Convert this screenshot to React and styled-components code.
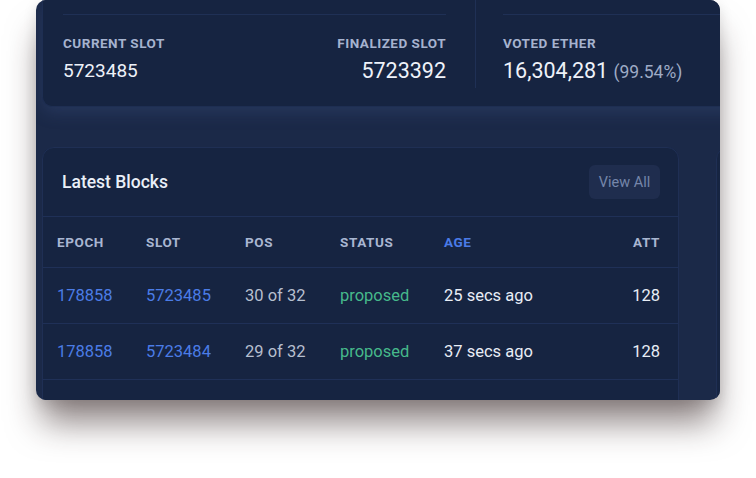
import React from "react";
import styled, { createGlobalStyle } from "styled-components";

const GlobalStyle = createGlobalStyle`
  body {
    margin: 0;
    background: #ffffff;
    font-family: Roboto, "Liberation Sans", sans-serif;
  }
`;

const Stage = styled.div`
  width: 756px;
  height: 478px;
  padding-left: 36px;
  box-sizing: border-box;
`;

const Window = styled.div`
  width: 684px;
  height: 400px;
  border-radius: 10px;
  overflow: hidden;
  background: #1b2948;
  box-shadow: 0 28px 34px -6px rgba(45, 28, 28, 0.55), 0 4px 14px rgba(0, 0, 0, 0.12);
  padding-left: 6px;
  box-sizing: border-box;
  display: flex;
  flex-direction: column;
`;

const StatsCard = styled.div`
  flex: none;
  width: 720px;
  height: 107px;
  box-sizing: border-box;
  background: #162441;
  border: 1px solid #1e2e52;
  border-top: none;
  border-radius: 0 0 10px 10px;
  padding-left: 20px;
  display: flex;
  align-items: flex-start;
  box-shadow: 0 6px 16px rgba(70, 95, 150, 0.25);
`;

const StatGroup = styled.div`
  width: ${(p) => p.width}px;
  margin-top: 14px;
  border-top: 1px solid #1f3055;
  padding-top: 20px;
  display: flex;
  justify-content: space-between;
`;

const Divider = styled.div`
  width: 1px;
  height: 88px;
  background: #1f3055;
  margin: 0 27px 0 29px;
`;

const Stat = styled.div`
  display: flex;
  flex-direction: column;
  align-items: ${(p) => (p.right ? "flex-end" : "flex-start")};
`;

const StatLabel = styled.div`
  font-size: 13.5px;
  line-height: 17px;
  font-weight: 700;
  letter-spacing: 0.5px;
  color: #a6b3cf;
  text-transform: uppercase;
`;

const StatValue = styled.div`
  margin-top: 7px;
  font-size: ${(p) => p.size}px;
  line-height: 24px;
  color: #eef2f9;
`;

const Muted = styled.span`
  font-size: 17.5px;
  color: #9eabc6;
`;

const Lower = styled.div`
  display: flex;
  gap: 37px;
  margin-top: 40px;
  align-items: flex-start;
`;

const BlocksCard = styled.div`
  flex: none;
  width: 637px;
  height: 300px;
  box-sizing: border-box;
  background: #162441;
  border: 1px solid #1f2f54;
  border-radius: 12px 12px 0 0;
`;

const SideCard = styled.div`
  flex: none;
  width: 200px;
  height: 300px;
  background: #172542;
  border: 1px solid #1f2f54;
  border-radius: 12px 0 0 0;
`;

const CardHeader = styled.div`
  height: 69px;
  box-sizing: border-box;
  border-bottom: 1px solid #1f3057;
  display: flex;
  align-items: center;
  justify-content: space-between;
  padding: 0 18px 0 19px;
`;

const Title = styled.h2`
  margin: 0;
  font-size: 17.5px;
  font-weight: 500;
  color: #eaeff8;
`;

const ViewAll = styled.button`
  height: 34px;
  width: 71px;
  border: none;
  border-radius: 6px;
  background: #1f2d4e;
  color: #7586aa;
  font-family: inherit;
  font-size: 14.5px;
  padding: 0;
`;

const Row = styled.div`
  display: grid;
  grid-template-columns: 89px 99px 95px 104px 1fr auto;
  align-items: center;
  height: ${(p) => (p.head ? 51 : 56)}px;
  box-sizing: border-box;
  padding: 0 18px 0 14px;
  border-bottom: 1px solid #1f3057;
`;

const HeadCell = styled.div`
  font-size: 13.5px;
  font-weight: 700;
  letter-spacing: 0.6px;
  color: ${(p) => (p.active ? "#4a7be8" : "#a9b6d1")};
  text-align: ${(p) => (p.right ? "right" : "left")};
`;

const Cell = styled.div`
  font-size: 16.5px;
  color: ${(p) =>
    p.tone === "link" ? "#4b7ce6" : p.tone === "ok" ? "#46b98b" : p.tone === "dim" ? "#b6bfcf" : "#e8edf6"};
  text-align: ${(p) => (p.right ? "right" : "left")};
`;

const blocks = [
  { epoch: "178858", slot: "5723485", pos: "30 of 32", age: "25 secs ago", att: "128" },
  { epoch: "178858", slot: "5723484", pos: "29 of 32", age: "37 secs ago", att: "128" },
  { epoch: "178858", slot: "5723483", pos: "28 of 32", age: "49 secs ago", att: "128" },
];

export default function App() {
  return (
    <Stage>
      <GlobalStyle />
      <Window>
        <StatsCard>
          <StatGroup width={386}>
            <Stat>
              <StatLabel>Current Slot</StatLabel>
              <StatValue size={19}>5723485</StatValue>
            </Stat>
            <Stat right>
              <StatLabel>Finalized Slot</StatLabel>
              <StatValue size={21.5}>5723392</StatValue>
            </Stat>
          </StatGroup>
          <Divider />
          <StatGroup width={260}>
            <Stat>
              <StatLabel>Voted Ether</StatLabel>
              <StatValue size={21.5}>
                16,304,281 <Muted>(99.54%)</Muted>
              </StatValue>
            </Stat>
          </StatGroup>
        </StatsCard>
        <Lower>
          <BlocksCard>
            <CardHeader>
              <Title>Latest Blocks</Title>
              <ViewAll>View All</ViewAll>
            </CardHeader>
            <Row head>
              <HeadCell>EPOCH</HeadCell>
              <HeadCell>SLOT</HeadCell>
              <HeadCell>POS</HeadCell>
              <HeadCell>STATUS</HeadCell>
              <HeadCell active>AGE</HeadCell>
              <HeadCell right>ATT</HeadCell>
            </Row>
            {blocks.map((b) => (
              <Row key={b.slot}>
                <Cell tone="link">{b.epoch}</Cell>
                <Cell tone="link">{b.slot}</Cell>
                <Cell tone="dim">{b.pos}</Cell>
                <Cell tone="ok">proposed</Cell>
                <Cell>{b.age}</Cell>
                <Cell right>{b.att}</Cell>
              </Row>
            ))}
          </BlocksCard>
          <SideCard />
        </Lower>
      </Window>
    </Stage>
  );
}
